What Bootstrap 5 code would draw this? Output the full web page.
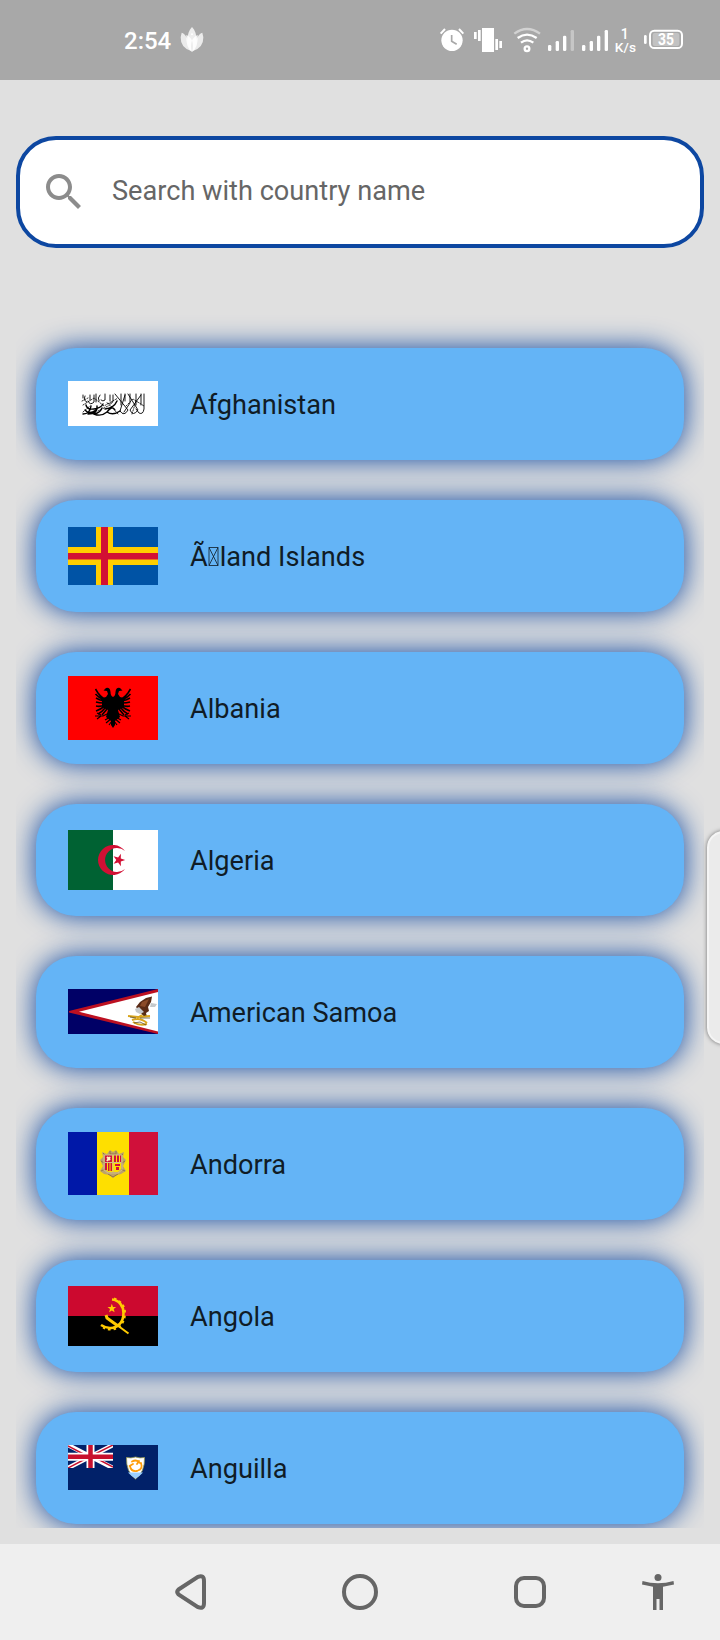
<!DOCTYPE html>
<html lang="en">
<head>
<meta charset="utf-8">
<meta name="viewport" content="width=device-width, initial-scale=1">
<title>Countries</title>
<link href="https://cdn.jsdelivr.net/npm/bootstrap@5.3.0/dist/css/bootstrap.min.css" rel="stylesheet">
<style>
  body { width: 720px; height: 1640px; background: #e0e0e0; font-family: Roboto, "Liberation Sans", sans-serif; }
  svg { display: block; flex: none; }
  .status-bar { height: 80px; background: #a8a8a8; color: #fff; padding: 0 20px 0 124px; }
  .clock { font-size: 24px; font-weight: 500; line-height: 28px; padding-top: 2px; }
  .search-box { height: 112px; margin: 56px 16px 0; border: 4px solid #0d47a1; border-radius: 40px; padding: 0 20px; background: #fff; }
  .search-hint { font-size: 27.15px; color: #666; margin-left: 24px; padding-bottom: 2px; white-space: nowrap; }
  .country-list { height: 1220px; margin: 60px 16px 0; padding: 40px 20px 0; overflow: hidden; flex: none; }
  .country { height: 112px; flex: none; border-radius: 40px; padding: 0 32px; background: #64b4f6; box-shadow: 0 0 28px #0d47a1; color: #101c26; font-size: 27.15px; white-space: nowrap; }
  .country + .country { margin-top: 40px; }
  .country > span { padding-top: 2px; }
  .country svg.flag { margin-right: 32px; }
  .country svg.odd { margin-bottom: 1px; }
  .tofu { display: inline-block; vertical-align: baseline; margin: 0 .5px; }
  .system-nav { height: 96px; background: #efefef; padding-left: 166px; }
  .home-key { margin-left: 120px; }
  .recent-key { margin-left: 124px; }
  .access-key { margin-left: 80px; }
  .edge-handle { position: absolute; right: -20px; top: 831px; width: 33px; height: 213px; border-radius: 20px; background: #ebebeb; border: 2px solid #f5f5f5; box-shadow: 0 0 4px rgba(0,0,0,.5); }
</style>
</head>
<body class="d-flex flex-column position-relative overflow-hidden">

<header class="status-bar d-flex align-items-center">
  <span class="clock">2:54</span>
  <svg class="ms-2" width="26" height="28" viewBox="0 0 78 84">
    <path d="M8 20Q24 22 38 76Q4 66 5 34ZM70 20Q54 22 40 76Q74 66 73 34Z" fill="#ebebeb"/>
    <path d="M39 3C57 22 57 55 39 78C21 55 21 22 39 3Z" fill="#ededed"/>
    <path d="M22 27Q48 38 40 78Q20 67 22 27ZM56 27Q30 38 38 78Q58 67 56 27Z" fill="#fff" opacity=".85"/>
    <circle cx="39" cy="25" r="3" fill="#fff"/>
  </svg>
  <svg class="ms-auto" width="270" height="60" viewBox="0 0 810 180" fill="#fff">
    <circle cx="66" cy="91" r="32"/>
    <path d="M32 71L45 57M100 71L87 57" stroke="#fff" stroke-width="6"/>
    <path d="M65 75V94L80 103" stroke="#a8a8a8" stroke-width="5" fill="none"/>
    <path d="M156 54H192V126H156ZM144 60H152V93H144ZM132 66H140V87H132ZM196 87H204V120H196ZM208 93H216V114H208Z"/>
    <g fill="none" stroke="#fff" stroke-width="7">
      <path d="M253 71Q291 43 330 71" stroke="#d2d2d2"/>
      <path d="M263 84Q291 64 320 84M273 98Q291 84 310 98"/>
      <circle cx="291" cy="116" r="7"/>
    </g>
    <rect x="354" y="105" width="10" height="18" rx="4"/><rect x="377" y="93" width="10" height="30" rx="4"/><rect x="399" y="77" width="10" height="46" rx="4"/><rect x="422" y="60" width="10" height="63" rx="4" opacity=".35"/>
    <rect x="456" y="105" width="10" height="18" rx="4"/><rect x="479" y="93" width="10" height="30" rx="4"/><rect x="501" y="77" width="10" height="46" rx="4"/><rect x="524" y="60" width="10" height="63" rx="4"/>
    <text x="584" y="87" font-size="42" font-weight="500" text-anchor="middle">1</text>
    <text x="554" y="126" font-size="41" font-weight="500" textLength="64">K/s</text>
    <rect x="642" y="75" width="8" height="27" rx="4"/>
    <rect x="660" y="62" width="96" height="52" rx="13" fill="none" stroke="#fff" stroke-width="6"/>
    <rect x="668" y="69" width="80" height="39" rx="6" opacity=".3"/>
    <text x="708" y="105" font-size="47" font-weight="700" text-anchor="middle" textLength="48" lengthAdjust="spacingAndGlyphs">35</text>
  </svg>
</header>

<div class="search-box d-flex align-items-center flex-shrink-0">
  <svg width="48" height="48" viewBox="0 0 24 24" fill="#8c8c8c"><path d="M15.5 14h-.79l-.28-.27C15.41 12.59 16 11.11 16 9.5 16 5.91 13.09 3 9.5 3S3 5.91 3 9.5 5.91 16 9.5 16c1.61 0 3.09-.59 4.23-1.57l.27.28v.79l5 4.99L20.49 19l-4.99-5zm-6 0C7.01 14 5 11.99 5 9.5S7.01 5 9.5 5 14 7.01 14 9.5 11.99 14 9.5 14z"/></svg>
  <span class="search-hint">Search with country name</span>
</div>

<main class="country-list d-flex flex-column">
  <div class="country d-flex align-items-center">
    <svg class="flag odd" width="90" height="45" viewBox="0 0 90 45">
      <path fill="#fff" d="M0 0H90V45H0Z"/>
      <!-- calligraphic band -->
      <g fill="none" stroke="#000" stroke-width=".9" stroke-linecap="round">
        <path d="M76 13V28Q75 34 71 32L68 28M73 13V24M73 14L62 29Q65 36 70 29L60 13M68 13V24M62 13V22L56 31M57 13V20M57 14L52 30Q56 36 60 29L47 13M53 13V24"/>
        <path stroke-width="1.400" d="M52 30Q45 35 39 31Q44 24 47 29M39 31Q33 36 26 33Q32 32 34 27M29 25Q30 33 20 33M23 25Q22 33 15 33M18 24Q19 29 26 28T35 23M17 29Q21 34 28 29M49 20Q46 27 37 28"/>
        <path d="M45 14V20Q43 25 39 22M42 14V20M37 13V19Q35 21 33 19M32 14Q29 17 31 20M28 13V21M26 14V21Q22 25 20 20M22 14V19M17 15Q15 20 19 21M15 14V17"/>
        <path stroke-width=".8" stroke-dasharray="1.500 1.500" d="M15 24L26 17L36 25L50 17M58 25L65 18L76 25M15 31L22 25M30 30L42 24L50 33M64 33L68 20M14 20L20 17"/>
      </g>
    </svg>
    <span>Afghanistan</span>
  </div>
  <div class="country d-flex align-items-center">
    <svg class="flag" width="90" height="58" viewBox="0 0 90 58">
      <path fill="#0053a5" d="M0 0H90V58H0Z"/>
      <path fill="#ffce00" d="M28 0H45V20H90V38H45V58H28V38H0V20H28Z"/>
      <path fill="#d21034" d="M33 0H40V26H90V32.5H40V58H33V32.5H0V26H33Z"/>
    </svg>
    <span>Ã<svg class="tofu" width="11" height="19" viewBox="0 0 11 19" fill="none" stroke="#101c26" stroke-width=".8"><path d="M1 .5H10V18.500H1ZL10 18.500M10 .5L1 18.500"/></svg>land Islands</span>
  </div>
  <div class="country d-flex align-items-center">
    <svg class="flag" width="90" height="64" viewBox="0 0 90 64">
      <path fill="#f00" d="M0 0H90V64H0Z"/>
      <g id="half-eagle">
        <path d="M45 21Q42.500 20 42.500 16Q42 11 38 12L35.500 14.500L39 15L40 18L38 21L34 22L34 31L40 34L38 41L43 45V49L45 52Z"/>
        <path fill="none" stroke="#000" stroke-width="1.600" d="M27.500 13L30 17Q32 20 36 23M27.500 18Q30 21 36 24M28 22Q31 24 36 25M28 26Q31 27 36 27M28 30Q32 31 37 29M28 35Q33 33 37 30M30 38Q34 36 38 31M34 39L39 33"/>
        <path fill="none" stroke="#000" stroke-width="1.100" d="M41 37L35 40L27 40M33 40L29 43M33 39L29 37M37 44L44 40M38 47L44 42M41 49L44 45"/>
      </g>
      <use href="#half-eagle" transform="matrix(-1 0 0 1 90 0)"/>
    </svg>
    <span>Albania</span>
  </div>
  <div class="country d-flex align-items-center">
    <svg class="flag" width="90" height="60" viewBox="0 0 90 60">
      <path fill="#fff" d="M45 0H90V60H45Z"/><path fill="#006233" d="M0 0H45V60H0Z"/>
      <path fill="#d21034" d="M57 21A15 15 0 1 0 57 39A12 12 0 1 1 57 21Z"/>
      <path fill="#d21034" d="M57.200 30L52.800 31.500 52.900 36.200 50.100 32.500 45.600 33.800 48.300 30 45.600 26.200 50.100 27.500 52.900 23.800 52.800 28.500Z"/>
    </svg>
    <span>Algeria</span>
  </div>
  <div class="country d-flex align-items-center">
    <svg class="flag odd" width="90" height="45" viewBox="0 0 90 45">
      <path fill="#006" d="M0 0H90V45H0Z"/>
      <path fill="#bd1021" d="M90 0V45L1 23.500V22Z"/><path fill="#fff" d="M90 3V42.500L11 22.700Z"/>
      <path fill="#5a2b16" d="M68 18L72 13L78 9L84 7.500L83 13L80 18L81 22L78 24L79 28H76L73 24Z"/>
      <path fill="#8b4b29" d="M74 13L81 10L77 18L72 17Z"/>
      <path fill="#c5c9cc" d="M67 20L71 18L76 23L72 25L68 23ZM83 14L89 15L87 18L82 18Z"/>
      <path fill="none" stroke="#d9a51c" stroke-width="2" d="M60 27L70 28L82 27M69 29L74 26M64 31Q72 28 79 34M65 33Q71 37 79 35"/>
      <path fill="none" stroke="#493a16" stroke-width=".7" d="M62 28L68 29M72 29H82M66 34L72 33L78 36M75 24L77 27"/>
    </svg>
    <span>American Samoa</span>
  </div>
  <div class="country d-flex align-items-center">
    <svg class="flag odd" width="90" height="63" viewBox="0 0 90 63">
      <path fill="#0018a8" d="M0 0H29V63H0Z"/><path fill="#fedf00" d="M29 0H61V63H29Z"/><path fill="#d0103a" d="M61 0H90V63H61Z"/>
      <path fill="#bda26a" d="M34 20L39 22L42 18L45 20L48 18L51 22L56 20L55 25L58 28L55 34L58 39L53 42L49 43L45 46L41 43L36 42L32 39L35 34L32 28L35 25Z"/>
      <path fill="none" stroke="#8a6d3c" stroke-width=".8" d="M35 21L38 24M42 19V22H48V19M55 22L52 24M33 29L36 31M57 29L54 31M33 39L37 37M57 39L53 37M40 42L45 45L50 42"/>
      <path fill="#fedf00" d="M37 23H53V37L50 40H40L37 37Z"/>
      <path fill="#d0103a" d="M37 23H44V30H37ZM46 23H48V30H46ZM49 23H51V30H49ZM52 23H53V30H52ZM37 31H39V38H37ZM40 31H41.500V39H40ZM42.500 31H44V39H42.500ZM47 32H52V34H47ZM48 35H51V38H48Z"/>
      <path fill="none" stroke="#fff2c0" stroke-width="2" d="M39 25L42 28M42 25L39 29"/>
      <path fill="none" stroke="#d2bd8a" stroke-width="1" d="M36 23V38L40 41H50L54 38V23H36M37 30.500H53M45 23V40"/>
    </svg>
    <span>Andorra</span>
  </div>
  <div class="country d-flex align-items-center">
    <svg class="flag" width="90" height="60" viewBox="0 0 90 60">
      <path fill="#cc092f" d="M0 0H90V30H0Z"/><path d="M0 30H90V60H0Z"/>
      <g fill="none" stroke="#ffcb00">
        <path stroke-width="2.600" d="M44 13.500C51 14 55.500 20 55.500 27C55.500 37 49 42.500 42 42C38 42 36 41 33 39"/>
        <path stroke-width="2" stroke-dasharray="2.500 3" d="M46 12.500C53 15 57 20 57 27C57 38 50 44 42 43.500C38 43.500 36 42 33 40"/>
        <path stroke-width="3" d="M38 29L39 32L50 40"/><path stroke-width="2" d="M49 39L60.500 47.500M45 42L51 38"/>
      </g>
      <path fill="#ffcb00" d="M43.800 17.800L45 20.900 48.200 21 45.700 23 46.600 26.200 43.800 24.400 41.100 26.200 42 23 39.500 21 42.700 20.900Z"/>
    </svg>
    <span>Angola</span>
  </div>
  <div class="country d-flex align-items-center">
    <svg class="flag odd" width="90" height="45" viewBox="0 0 90 45">
      <path fill="#012169" d="M0 0H90V45H0Z"/>
      <svg width="45" height="23" viewBox="0 0 45 23">
        <path stroke="#fff" stroke-width="4.500" d="M0 0L45 23M45 0L0 23"/>
        <path stroke="#c8102e" stroke-width="1.500" d="M0 1L22 12.500M45 22L23 10.500M45 0L23 11M0 23L22 11.500"/>
        <path stroke="#fff" stroke-width="8" d="M22.500 0V23M0 11.800H45"/>
        <path stroke="#c8102e" stroke-width="4.500" d="M22.500 0V23M0 11.800H45"/>
      </svg>
      <path fill="#fff" stroke="#9a9a50" stroke-width=".8" d="M58.500 12.500Q63 13.500 67.500 12Q72 13.500 76.500 12.500Q77 27 67.500 34Q58 27 58.500 12.500Z"/>
      <path fill="#9bcfff" d="M60 27.500H75Q72 31 67.500 33.500Q63 31 60 27.500Z"/>
      <g fill="none" stroke="#ff9d0a" stroke-width="1.800" stroke-linecap="round"><path d="M64 16.500Q69 14 72 18M73 18Q75 24 70 25.500M69 26Q63 27 62 21M61.500 21L65 19M71 16L69 19"/></g>
    </svg>
    <span>Anguilla</span>
  </div>
</main>

<nav class="system-nav d-flex align-items-center mt-auto flex-shrink-0">
  <svg width="48" height="48" viewBox="0 0 48 48" fill="none" stroke="#666" stroke-width="4"><path d="M12.500 21.500L32 8.800Q38 6.500 38 13V35Q38 41.500 32 39.200L12.500 26.500Q10 24 12.500 21.500Z"/></svg>
  <svg class="home-key" width="48" height="48" viewBox="0 0 48 48" fill="none" stroke="#666" stroke-width="4"><circle cx="26" cy="24" r="16"/></svg>
  <svg class="recent-key" width="48" height="48" viewBox="0 0 48 48" fill="none" stroke="#666" stroke-width="4"><rect x="10" y="10" width="28" height="28" rx="8"/></svg>
  <svg class="access-key" width="48" height="48" viewBox="0 0 48 48" fill="#666"><circle cx="24" cy="9.500" r="3.500"/><path d="M8.500 13Q24 17.500 39.500 13L40 16.500L29 18.800V42H25.500V31H22.500V42H19V18.800L8 16.500Z"/></svg>
</nav>

<div class="edge-handle"></div>
<script src="https://cdn.jsdelivr.net/npm/bootstrap@5.3.0/dist/js/bootstrap.bundle.min.js"></script>
</body>
</html>
